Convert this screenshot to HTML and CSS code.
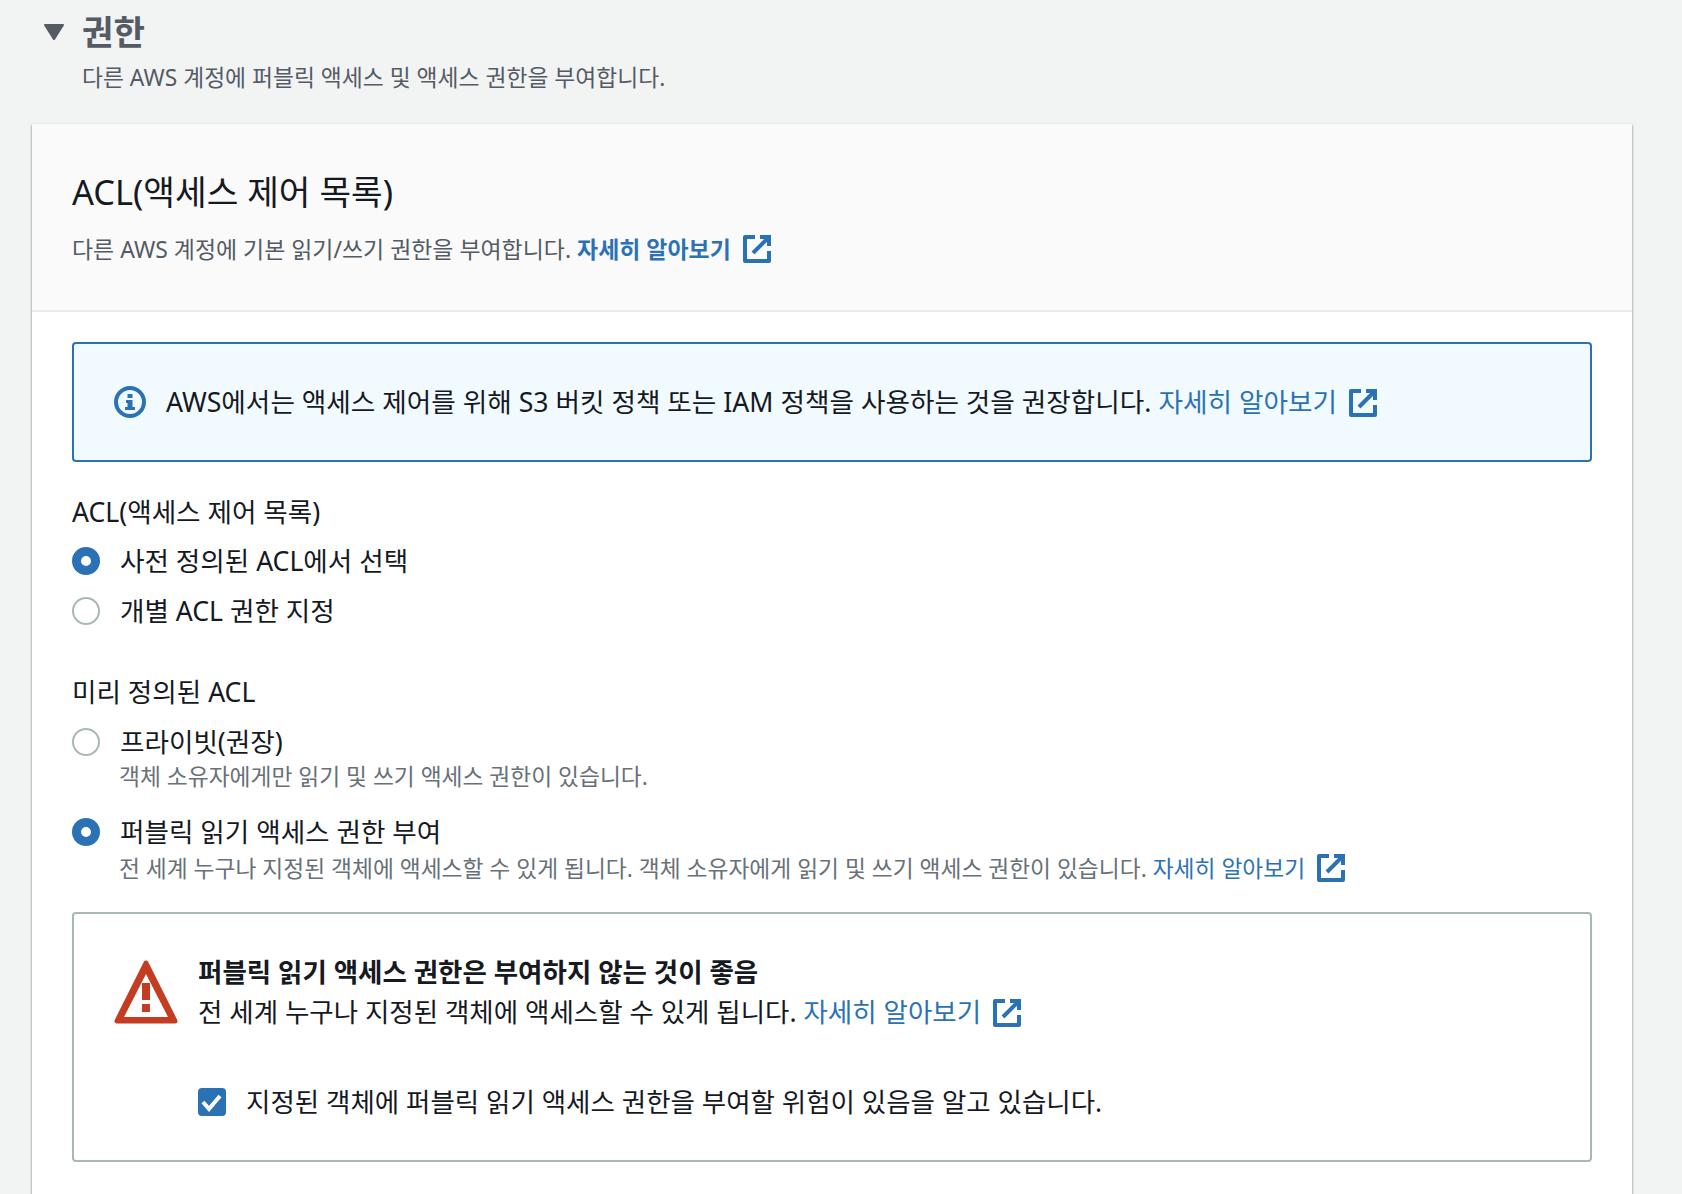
FILE: index.html
```html
<!DOCTYPE html>
<html lang="ko">
  <head>
    <meta charset="UTF-8" />
    <title>권한</title>
    <link rel="stylesheet" href="styles.css">
  </head>
  <body>
    <svg class="defs" aria-hidden="true">
      <symbol id="icon-external" viewBox="0 0 28 28">
        <path d="M12 2H2v24h24V16" fill="none" stroke="currentColor" stroke-width="4" stroke-linejoin="round" />
        <path d="M17 2h9v9" fill="none" stroke="currentColor" stroke-width="4" />
        <path d="M10 18L25 3" fill="none" stroke="currentColor" stroke-width="4" />
      </symbol>
    </svg>

    <section class="section">
      <header class="section-head">
        <svg class="caret" viewBox="0 0 20 16"><path d="M1 0h18a1 1 0 0 1 .8 1.5L11 15.4a1.2 1.2 0 0 1-2 0L.2 1.5A1 1 0 0 1 1 0z" /></svg>
        <h1>권한</h1>
      </header>
      <p class="section-desc">다른 AWS 계정에 퍼블릭 액세스 및 액세스 권한을 부여합니다.</p>

      <div class="card">
        <div class="card-head">
          <h2>ACL(액세스 제어 목록)</h2>
          <p class="card-desc">다른 AWS 계정에 기본 읽기/쓰기 권한을 부여합니다. <a class="link strong" href="#">자세히 알아보기<svg class="ext"><use href="#icon-external" /></svg></a></p>
        </div>

        <div class="card-body">
          <div class="alert alert-info">
            <svg class="info-icon" viewBox="0 0 32 32">
              <circle cx="16" cy="16" r="14" fill="none" stroke="currentColor" stroke-width="4" />
              <path d="M13.5 8h5v4h-5zM12 14h6.5v7H21v3H11v-3h2.5v-4H12z" fill="currentColor" />
            </svg>
            <p>AWS에서는 액세스 제어를 위해 S3 버킷 정책 또는 IAM 정책을 사용하는 것을 권장합니다. <a class="link" href="#">자세히 알아보기<svg class="ext"><use href="#icon-external" /></svg></a></p>
          </div>

          <div class="field field-first">
            <div class="field-label">ACL(액세스 제어 목록)</div>
            <label class="radio"><span class="dot on"></span><span class="radio-text">사전 정의된 ACL에서 선택</span></label>
            <label class="radio"><span class="dot"></span><span class="radio-text">개별 ACL 권한 지정</span></label>
          </div>

          <div class="field field-second">
            <div class="field-label">미리 정의된 ACL</div>
            <label class="radio"><span class="dot"></span><span class="radio-text">프라이빗(권장)</span></label>
            <p class="radio-desc">객체 소유자에게만 읽기 및 쓰기 액세스 권한이 있습니다.</p>
            <label class="radio radio-gap"><span class="dot on"></span><span class="radio-text">퍼블릭 읽기 액세스 권한 부여</span></label>
            <p class="radio-desc desc-link">전 세계 누구나 지정된 객체에 액세스할 수 있게 됩니다. 객체 소유자에게 읽기 및 쓰기 액세스 권한이 있습니다. <a class="link" href="#">자세히 알아보기<svg class="ext"><use href="#icon-external" /></svg></a></p>
          </div>

          <div class="alert alert-warn">
            <svg class="warn-icon" viewBox="0 0 64 64">
              <path d="M32 3L3 61h58z" fill="currentColor" stroke="currentColor" stroke-width="5" stroke-linejoin="round" />
              <path d="M32 14L10 57h44z" fill="#fff" />
              <path d="M28 23h8v17h-8zM28 44h8v8h-8z" fill="currentColor" />
            </svg>
            <div class="warn-body">
              <div class="warn-title">퍼블릭 읽기 액세스 권한은 부여하지 않는 것이 좋음</div>
              <p class="warn-text">전 세계 누구나 지정된 객체에 액세스할 수 있게 됩니다. <a class="link" href="#">자세히 알아보기<svg class="ext"><use href="#icon-external" /></svg></a></p>
              <label class="check">
                <span class="box"><svg viewBox="0 0 28 28"><path d="M5 14l6 7 11-13" fill="none" stroke="#fff" stroke-width="4" /></svg></span>
                <span class="radio-text">지정된 객체에 퍼블릭 읽기 액세스 권한을 부여할 위험이 있음을 알고 있습니다.</span>
              </label>
            </div>
          </div>
        </div>
      </div>
    </section>
  </body>
</html>
```

FILE: styles.css
```css
* {
  margin: 0;
  padding: 0;
  box-sizing: border-box;
}

html,
body {
  height: 100%;
  overflow: hidden;
}

body {
  background-color: #f2f3f3;
  color: #16191f;
  font-family: "Noto Sans", "Noto Sans CJK KR", sans-serif;
  font-size: 26.6px;
}

.defs {
  display: none;
}

/* section title */
.section {
  padding: 8px 50px 0 32px;
}

.section-head {
  display: flex;
  align-items: center;
  height: 48px;
  padding-left: 12px;
}

.caret {
  width: 20px;
  height: 16px;
  fill: #545b64;
  margin-right: 18px;
}

h1 {
  font-size: 34.2px;
  font-weight: 700;
  line-height: 48px;
  color: #545b64;
}

.section-desc {
  margin-top: 6px;
  padding-left: 50px;
  font-size: 22.8px;
  line-height: 32px;
  color: #545b64;
}

/* card */
.card {
  margin-top: 30px;
  background-color: #fff;
  box-shadow: 0 1px 2px rgba(0, 28, 36, 0.3), 1px 1px 2px rgba(0, 28, 36, 0.15), -1px 1px 2px rgba(0, 28, 36, 0.15);
}

.card-head {
  height: 188px;
  padding: 44px 40px 0;
  background-color: #fafafa;
  border-bottom: 2px solid #eaeded;
}

h2 {
  font-size: 34.4px;
  font-weight: 400;
  line-height: 48px;
}

.card-desc {
  margin-top: 16px;
  font-size: 22.95px;
  line-height: 34px;
  color: #545b64;
}

.link {
  color: #2b72b5;
  text-decoration: none;
}

.strong {
  font-weight: 700;
}

.ext {
  display: inline-block;
  width: 28px;
  height: 28px;
  margin-left: 12px;
  vertical-align: -5px;
  color: #2b72b5;
}

.card-body {
  padding: 30px 40px 60px;
}

/* alerts */
.alert {
  display: flex;
  border: 2px solid #2b72b5;
  border-radius: 4px;
}

.alert-info {
  align-items: center;
  height: 120px;
  padding-left: 40px;
  background-color: #f1faff;
}

.alert-info p {
  margin-top: -4px;
  font-size: 26.65px;
}

.info-icon {
  width: 32px;
  height: 32px;
  margin-right: 20px;
  color: #2b72b5;
  flex-shrink: 0;
}

.alert-warn {
  height: 250px;
  margin-top: 27px;
  padding: 38px 0 0 40px;
  border-color: #aab7b8;
}

.warn-icon {
  width: 64px;
  height: 64px;
  margin: 8px 20px 0 0;
  color: #c33d22;
  flex-shrink: 0;
}

.warn-title {
  font-size: 26.5px;
  font-weight: 700;
  line-height: 40px;
}

.warn-text {
  font-size: 26.5px;
  line-height: 41px;
}

.check {
  display: flex;
  align-items: center;
  height: 38px;
  margin-top: 50px;
  font-size: 26.5px;
}

.box {
  width: 28px;
  height: 28px;
  margin-right: 20px;
  border-radius: 4px;
  background-color: #2b72b5;
}

.box svg {
  display: block;
  width: 28px;
  height: 28px;
}

/* form fields */
.field-first {
  margin-top: 31px;
}

.field-second {
  margin-top: 37px;
}

.field-label {
  line-height: 38px;
}

.radio {
  display: flex;
  align-items: center;
  height: 50px;
}

.radio-text {
  margin-bottom: 3px;
}

.field-first .field-label {
  margin-bottom: 5px;
}

.field-second .field-label {
  margin-bottom: 12px;
}

.field-second .radio {
  height: 38px;
}

.dot {
  width: 28px;
  height: 28px;
  margin-right: 20px;
  border: 2px solid #aab7b8;
  border-radius: 50%;
  background-color: #fff;
  flex-shrink: 0;
}

.dot.on {
  border: 9px solid #2b72b5;
}

.radio-desc {
  padding-left: 47px;
  font-size: 22.75px;
  line-height: 32px;
  color: #687078;
}

.radio-gap {
  margin-top: 20px;
}

.desc-link {
  margin-top: 2px;
}
```
